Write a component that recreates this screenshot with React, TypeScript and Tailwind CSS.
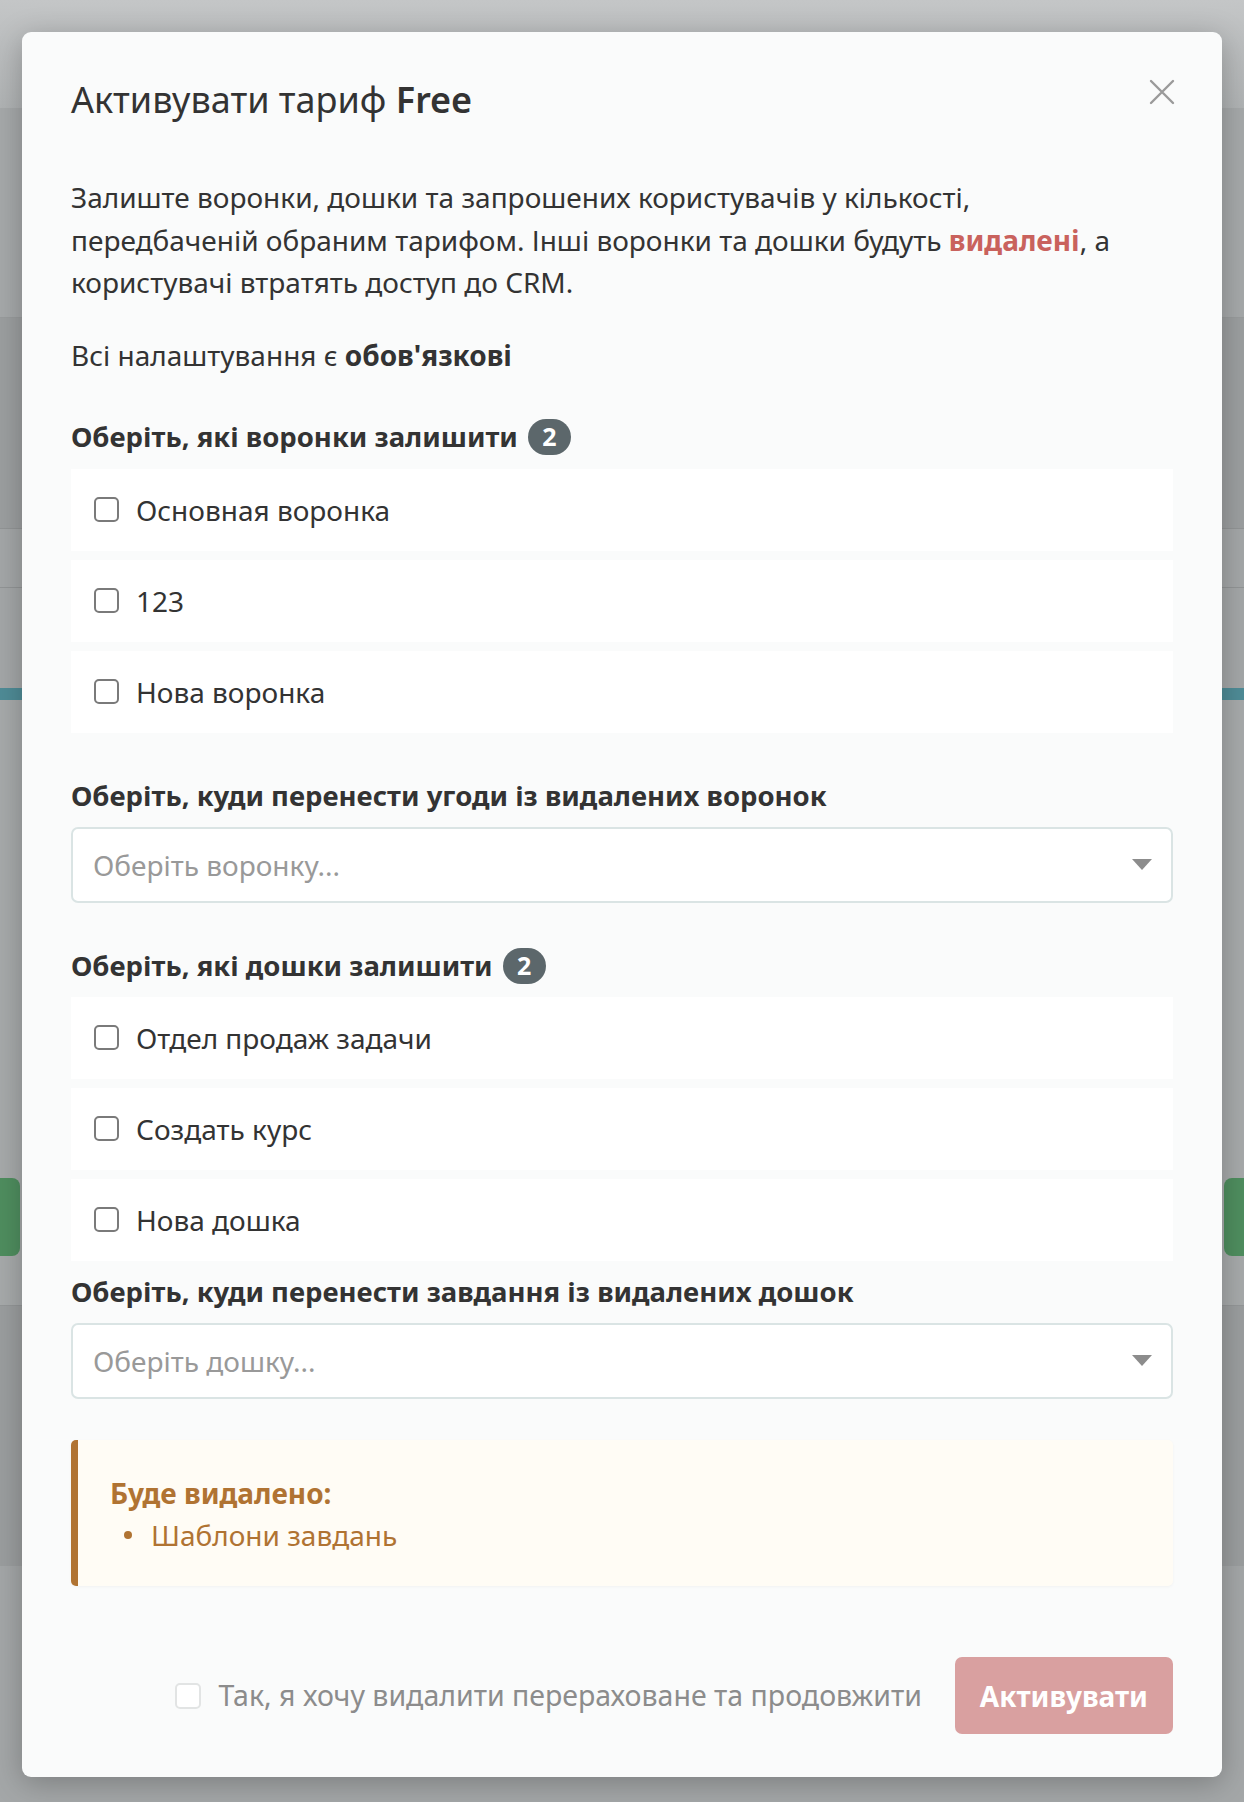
import { useState } from "react";

type Option = { id: string; label: string };

const funnels: Option[] = [
  { id: "f1", label: "Основная воронка" },
  { id: "f2", label: "123" },
  { id: "f3", label: "Нова воронка" },
];

const boards: Option[] = [
  { id: "b1", label: "Отдел продаж задачи" },
  { id: "b2", label: "Создать курс" },
  { id: "b3", label: "Нова дошка" },
];

function Badge({ value }: { value: number }) {
  return (
    <span className="ml-[10px] inline-flex h-[36px] min-w-[43px] items-center justify-center rounded-full bg-[#5c676b] px-[10px] text-[25px] font-bold leading-none text-white">
      {value}
    </span>
  );
}

function SectionTitle({ children, badge }: { children: React.ReactNode; badge?: number }) {
  return (
    <div className="flex h-[42px] items-center text-[27.5px] font-bold text-[#333]">
      <span>{children}</span>
      {badge !== undefined && <Badge value={badge} />}
    </div>
  );
}

function CheckRow({ option, checked, onToggle }: { option: Option; checked: boolean; onToggle: () => void }) {
  return (
    <label className="flex h-[82px] cursor-pointer items-center bg-white pl-[23px]">
      <span
        className={
          checked
            ? "flex h-[25px] w-[25px] items-center justify-center rounded-[5px] border-2 border-[#5c676b] bg-[#5c676b]"
            : "flex h-[25px] w-[25px] items-center justify-center rounded-[5px] border-2 border-[#7a7a7a] bg-white"
        }
      >
        <input type="checkbox" className="hidden" checked={checked} onChange={onToggle} />
      </span>
      <span className="ml-[17px] text-[28px] text-[#333]">{option.label}</span>
    </label>
  );
}

function SelectBox({ placeholder }: { placeholder: string }) {
  return (
    <div className="flex h-[76px] items-center justify-between rounded-[7px] border-2 border-[#dae4e4] bg-white pl-[20px] pr-[19px]">
      <span className="text-[28px] text-[#999]">{placeholder}</span>
      <svg width="20" height="11" viewBox="0 0 20 11">
        <path d="M0 0h20L10 11z" fill="#8c8c8c" />
      </svg>
    </div>
  );
}

function BackgroundPage() {
  return (
    <div className="flex h-[1802px] flex-col bg-[#a2a5a6]">
      <div className="h-[108px] bg-gradient-to-b from-[#c4c6c7] to-[#b0b3b4]" />
      <div className="h-[210px] border-b border-[#999c9d] bg-[#a6a9aa]" />
      <div className="h-[210px] bg-[#9c9fa0]" />
      <div className="h-[60px] border-y border-[#929596] bg-[#a4a7a8]" />
      <div className="h-[100px] bg-[#a4a7a8]" />
      <div className="h-[12px] bg-[#4f8c97]" />
      <div className="h-[478px] bg-[#a7aaab]" />
      <div className="flex h-[78px] items-stretch justify-between bg-[#a7aaab]">
        <div className="w-[20px] rounded-r-[8px] bg-[#4f8e5f]" />
        <div className="w-[20px] rounded-l-[8px] bg-[#4f8e5f]" />
      </div>
      <div className="h-[50px] border-b border-[#949798] bg-[#a7aaab]" />
      <div className="h-[260px] bg-[#9b9e9f]" />
      <div className="flex-1 bg-[#a4a7a8]" />
    </div>
  );
}

export default function App() {
  const [checked, setChecked] = useState<Record<string, boolean>>({});
  const [confirm, setConfirm] = useState(false);
  const toggle = (id: string) => setChecked((s) => ({ ...s, [id]: !s[id] }));

  return (
    <div
      className="relative h-[1802px] w-[1244px] overflow-hidden"
      style={{ fontFamily: '"Noto Sans", "Open Sans", sans-serif' }}
    >
      <BackgroundPage />

      <div className="absolute left-[22px] top-[32px] flex h-[1745px] w-[1200px] flex-col rounded-[9px] bg-[#fafbfb] px-[49px] pb-[43px] pt-[46px] shadow-[0_6px_30px_rgba(0,0,0,0.25)]">
        <div className="flex items-center justify-between">
          <h2 className="text-[36px] leading-[43px] text-[#333]">
            Активувати тариф <span className="font-semibold">Free</span>
          </h2>
          <button className="-mt-[16px] mr-[-2px] text-[#999]" aria-label="Закрити">
            <svg width="26" height="26" viewBox="0 0 26 26">
              <path d="M2 2l22 22M24 2L2 24" stroke="#9a9a9a" strokeWidth="2.4" strokeLinecap="round" />
            </svg>
          </button>
        </div>

        <p className="mt-[55px] text-[28px] leading-[42.5px] text-[#333]">
          Залиште воронки, дошки та запрошених користувачів у кількості,
          <br />
          передбаченій обраним тарифом. Інші воронки та дошки будуть{" "}
          <span className="font-bold text-[#c9625d]">видалені</span>, а
          <br />
          користувачі втратять доступ до CRM.
        </p>

        <p className="mt-[30px] text-[28px] leading-[42px] text-[#333]">
          Всі налаштування є <span className="font-bold">обов'язкові</span>
        </p>

        <div className="mt-[40px]">
          <SectionTitle badge={2}>Оберіть, які воронки залишити</SectionTitle>
        </div>
        <div className="mt-[11px] flex flex-col gap-[9px]">
          {funnels.map((f) => (
            <CheckRow key={f.id} option={f} checked={!!checked[f.id]} onToggle={() => toggle(f.id)} />
          ))}
        </div>

        <div className="mt-[42px]">
          <SectionTitle>Оберіть, куди перенести угоди із видалених воронок</SectionTitle>
        </div>
        <div className="mt-[10px]">
          <SelectBox placeholder="Оберіть воронку..." />
        </div>

        <div className="mt-[42px]">
          <SectionTitle badge={2}>Оберіть, які дошки залишити</SectionTitle>
        </div>
        <div className="mt-[10px] flex flex-col gap-[9px]">
          {boards.map((b) => (
            <CheckRow key={b.id} option={b} checked={!!checked[b.id]} onToggle={() => toggle(b.id)} />
          ))}
        </div>

        <div className="mt-[10px]">
          <SectionTitle>Оберіть, куди перенести завдання із видалених дошок</SectionTitle>
        </div>
        <div className="mt-[10px]">
          <SelectBox placeholder="Оберіть дошку..." />
        </div>

        <div className="mt-[41px] flex h-[146px] overflow-hidden rounded-[5px] bg-[#fffcf5] shadow-[0_1px_3px_rgba(0,0,0,0.04)]">
          <div className="w-[7px] bg-[#b07332]" />
          <div className="pl-[32px] pt-[32px] text-[28px] leading-[42px] text-[#b07332]">
            <div className="font-bold">Буде видалено:</div>
            <div className="flex items-center">
              <span className="ml-[14px] h-[8px] w-[8px] rounded-full bg-[#b07332]" />
              <span className="ml-[19px]">Шаблони завдань</span>
            </div>
          </div>
        </div>

        <div className="mt-auto flex items-center justify-end">
          <label className="flex cursor-pointer items-center">
            <span className="h-[26px] w-[26px] rounded-[5px] border-2 border-[#e2e4e4] bg-white">
              <input type="checkbox" className="hidden" checked={confirm} onChange={() => setConfirm(!confirm)} />
            </span>
            <span className="ml-[17px] text-[28.5px] text-[#8c8c8c]">Так, я хочу видалити перераховане та продовжити</span>
          </label>
          <button
            disabled={!confirm}
            className="ml-[33px] h-[77px] rounded-[7px] bg-[#d9a0a0] px-[25px] text-[28px] font-bold text-white"
          >
            Активувати
          </button>
        </div>
      </div>
    </div>
  );
}
